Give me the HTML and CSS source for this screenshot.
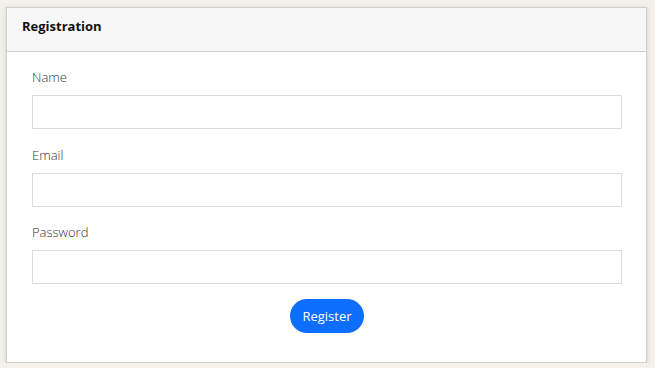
FILE: index.html
```html
<!DOCTYPE html>
<html lang="en">
  <head>
    <meta charset="UTF-8" />
    <meta name="viewport" content="width=device-width, initial-scale=1.0" />
    <title>Registration</title>
    <link rel="stylesheet" href="styles.css">
  </head>

  <body>
    <div class="card">
      <div class="card-header">Registration</div>
      <form class="card-body">
        <label class="field">
          <span>Name</span>
          <input type="text" />
        </label>
        <label class="field">
          <span>Email</span>
          <input type="email" />
        </label>
        <label class="field">
          <span>Password</span>
          <input type="password" />
        </label>
        <div class="actions">
          <button type="button">Register</button>
        </div>
      </form>
    </div>
  </body>
</html>
```

FILE: styles.css
```css
body {
  background-color: #f4f1ea;
  margin: 0;
  padding: 7px 8px 0 6px;
  font-family: "Open Sans", "Noto Sans", sans-serif;
  color: #212529;
}

.card {
  background-color: #fff;
  border: 1px solid #cfcfcf;
  box-shadow: 0 1px 5px rgba(120, 110, 90, 0.25);
}

.card-header {
  background-color: #f7f7f7;
  border-bottom: 1px solid #cfcfcf;
  height: 43px;
  line-height: 37px;
  padding: 0 15px;
  font-size: 13px;
  font-weight: 700;
  color: #111;
}

.card-body {
  display: flex;
  flex-direction: column;
  gap: 17px;
  padding: 16px 24px 29px 25px;
  margin: 0;
}

.field {
  display: flex;
  flex-direction: column;
  gap: 9px;
}

.field:nth-child(3) {
  margin-top: -1px;
}

.field span {
  font-size: 13px;
  font-weight: 300;
  line-height: 18px;
  color: #333;
}

.field input {
  height: 34px;
  box-sizing: border-box;
  border: 1px solid #dcdcdc;
  border-radius: 0;
  padding: 0 10px;
  font-family: inherit;
  font-size: 13px;
}

.actions {
  display: flex;
  justify-content: center;
  margin-top: -2px;
}

.actions button {
  height: 34px;
  padding: 0 12px;
  border: none;
  border-radius: 17px;
  background-color: #0d6efd;
  color: #fff;
  font-family: inherit;
  font-size: 13px;
}
```
